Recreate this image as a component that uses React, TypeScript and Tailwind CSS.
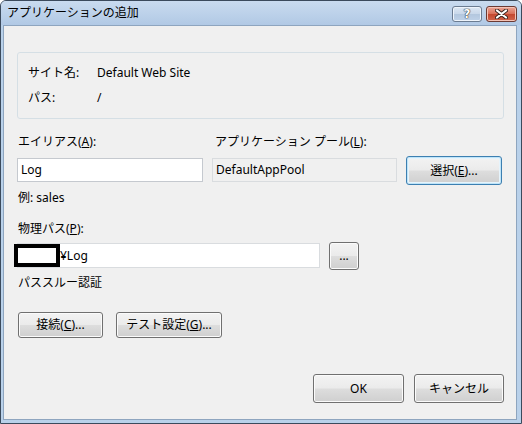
import React from "react";

const font = "font-['Noto_Sans','Noto_Sans_CJK_JP',sans-serif] text-[12px] leading-[16px] text-black";

const btnBase =
  "flex items-center justify-center rounded-[3px] border bg-[linear-gradient(#f3f3f3_0%,#ebebeb_48%,#dddddd_52%,#cfcfcf_100%)] text-[12px] leading-[16px]";
const btn = `${btnBase} border-[#707070] shadow-[inset_0_0_0_1px_#fbfbfb]`;
const btnDefault = `${btnBase} border-[#3c7fb1] shadow-[inset_0_0_0_1px_#bfe4f8,inset_0_0_0_2px_#e6f4fc]`;

const Key = ({ k }: { k: string }) => <span className="underline">{k}</span>;

const CaptionButton = ({ kind }: { kind: "help" | "close" }) =>
  kind === "help" ? (
    <div className="w-[30px] h-[16px] rounded-[3px] border border-[#6b7c91] bg-[linear-gradient(#dde8f4_0%,#c9d8ea_48%,#b3c7de_52%,#bfd2e8_100%)] flex items-center justify-center shadow-[inset_0_0_0_1px_#eef4fb]">
      <span className="font-['DejaVu_Sans',sans-serif] text-[12px] leading-[12px] font-bold text-white [text-shadow:0_0_1px_#333,0_0_1px_#333,0_0_1px_#333]">?</span>
    </div>
  ) : (
    <div className="w-[31px] h-[16px] rounded-[3px] border border-[#6b3a33] bg-[linear-gradient(#eba696_0%,#d9705a_48%,#c4472f_52%,#d0654c_100%)] flex items-center justify-center shadow-[inset_0_0_0_1px_#f4c3b6]">
      <svg width="13" height="10" viewBox="0 0 13 10">
        <path d="M2 1.5 L11 8.5 M11 1.5 L2 8.5" stroke="#3a2420" strokeWidth="4" strokeLinecap="round" />
        <path d="M2 1.5 L11 8.5 M11 1.5 L2 8.5" stroke="#ffffff" strokeWidth="2.2" strokeLinecap="round" />
      </svg>
    </div>
  );

export default function App() {
  return (
    <div className={`w-[522px] h-[424px] ${font}`}>
      <div className="w-full h-full flex flex-col rounded-t-[6px] border border-[#3b4a5c] bg-[#b9d1ea] overflow-hidden">
        {/* title bar */}
        <div className="h-[24px] flex items-center pl-[6px] pr-[4px] bg-[linear-gradient(#c9dbef,#b1c9e5)]">
          <span className="flex-1">アプリケーションの追加</span>
          <div className="flex gap-[4px] mt-[2px]">
            <CaptionButton kind="help" />
            <CaptionButton kind="close" />
          </div>
        </div>

        {/* client area */}
        <div className="flex-1 ml-[2px] mr-[4px] mb-[3px] border border-[#8ea5bf] bg-[#f0f0f0] flex flex-col pl-[13px] pr-[12px] pb-[16px]">
          <div className="mt-[26px] h-[67px] border border-[#d5dfe5] rounded-[3px] pl-[10px] pt-[7px]">
            <div className="grid grid-cols-[69px_1fr] auto-rows-[25px] items-center">
              <span>サイト名:</span>
              <span>Default Web Site</span>
              <span>パス:</span>
              <span>/</span>
            </div>
          </div>

          <div className="mt-[15px] grid grid-cols-[186px_185px_96px] gap-x-[9px] gap-y-[6px] items-end">
            <span className="pl-[1px]">
              エイリアス(<Key k="A" />):
            </span>
            <span className="pl-[3px]">
              アプリケーション プール(<Key k="L" />):
            </span>
            <span />
            <div className="h-[24px] border border-[#c5c9cf] bg-white flex items-center px-[3px]">Log</div>
            <div className="h-[24px] border border-[#d9dcdf] bg-[#f0f0f0] flex items-center px-[3px]">DefaultAppPool</div>
            <button className={`${btnDefault} h-[29px] -mb-[3px]`}>
              選択(<Key k="E" />)...
            </button>
          </div>

          <span className="mt-[8px] pl-[1px]">例: sales</span>

          <span className="mt-[15px] pl-[1px]">
            物理パス(<Key k="P" />):
          </span>
          <div className="mt-[5px] flex items-start gap-[9px]">
            <div className="w-[303px] h-[25px] mt-[1px] border border-[#d9dcdf] bg-white flex items-center">
              <span className="-ml-[4px] w-[46px] h-[23px] border-[4px] border-black bg-white" />
              <span>¥Log</span>
            </div>
            <button className={`${btn} w-[30px] h-[28px]`}>...</button>
          </div>

          <span className="mt-[5px] pl-[1px]">パススルー認証</span>

          <div className="mt-[21px] flex gap-[13px] pl-[1px]">
            <button className={`${btn} w-[85px] h-[26px]`}>
              接続(<Key k="C" />)...
            </button>
            <button className={`${btn} w-[106px] h-[26px]`}>
              テスト設定(<Key k="G" />)...
            </button>
          </div>

          <div className="mt-auto flex justify-end gap-[10px]">
            <button className={`${btn} w-[91px] h-[29px]`}>OK</button>
            <button className={`${btn} w-[90px] h-[29px]`}>キャンセル</button>
          </div>
        </div>
      </div>
    </div>
  );
}
